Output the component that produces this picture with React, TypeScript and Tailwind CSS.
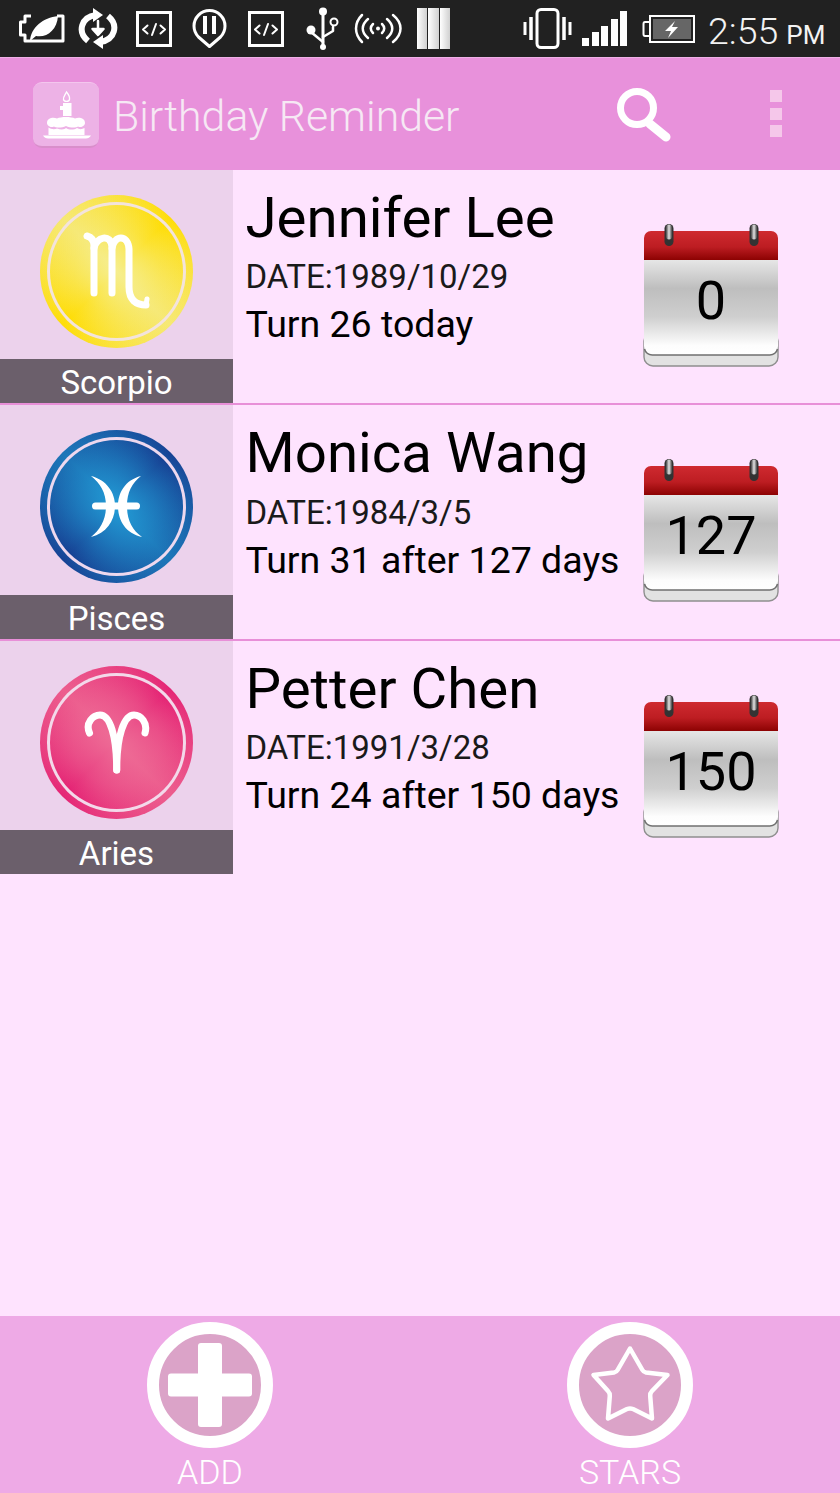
import type { ReactNode } from 'react'

const PEOPLE = [
  {
    name: 'Jennifer Lee',
    date: 'DATE:1989/10/29',
    turn: 'Turn 26 today',
    days: '0',
    sign: 'Scorpio',
    disc: 'bg-[radial-gradient(circle,#f6ee8e_0%,#f6ee8e55_45%,transparent_75%),conic-gradient(from_45deg,#ffdc00_0deg,#f6e873_90deg,#ffdc00_180deg,#f6e873_270deg,#ffdc00_360deg)]',
    rim: 'bg-[#f3e3dc]',
  },
  {
    name: 'Monica Wang',
    date: 'DATE:1984/3/5',
    turn: 'Turn 31 after 127 days',
    days: '127',
    sign: 'Pisces',
    disc: 'bg-[radial-gradient(circle,#229cd6_0%,#229cd688_40%,transparent_80%),conic-gradient(from_45deg,#15348a_0deg,#1c6fb3_90deg,#15348a_180deg,#1c6fb3_270deg,#15348a_360deg)]',
    rim: 'bg-[#eed8ee]',
  },
  {
    name: 'Petter Chen',
    date: 'DATE:1991/3/28',
    turn: 'Turn 24 after 150 days',
    days: '150',
    sign: 'Aries',
    disc: 'bg-[radial-gradient(circle,#ee6c96_0%,#ee6c9688_45%,transparent_80%),conic-gradient(from_45deg,#e3186f_0deg,#ec5a8c_90deg,#e3186f_180deg,#ec5a8c_270deg,#e3186f_360deg)]',
    rim: 'bg-[#f3d9ea]',
  },
]

function Glyph({ sign }: { sign: string }) {
  return (
    <svg viewBox="0 0 153 153" className="absolute inset-0 w-[153px] h-[153px]" fill="none" stroke="#fff" strokeLinecap="round" strokeLinejoin="round">
      {sign === 'Scorpio' && (
        <g strokeWidth="7">
          <path d="M47 41 C51 42 54 45 54 51 V98" />
          <path d="M54 53 C56 42 71 38 72 52 V98" />
          <path d="M72 53 C74 40 88 39 89 54 V92 C89 105 96 110 106 110" />
          <path d="M106 110 L107 104" strokeWidth="5" />
        </g>
      )}
      {sign === 'Pisces' && (
        <g fill="#fff" stroke="none">
          <path d="M51 46 C67 50 75 63 75 76 C75 90 67 103 51 107 C60 100 66 90 66 76 C66 62 60 53 51 46 Z" />
          <path d="M101 46 C85 50 78 63 78 76 C78 90 85 103 102 107 C92 100 87 90 87 76 C87 62 92 53 101 46 Z" />
          <rect x="52" y="72.5" width="48" height="7" rx="3.5" />
        </g>
      )}
      {sign === 'Aries' && (
        <g strokeWidth="7">
          <path d="M49.5 67 C45 57 53 49 60 49 C70 49 76.7 70 76.7 104" />
          <path d="M105 67 C108 57 101 49 94 49 C84 49 76.7 70 76.7 104" />
        </g>
      )}
    </svg>
  )
}

function Calendar({ days, id }: { days: string; id: number }) {
  return (
    <div className="relative w-[136px] h-[145px]">
      <svg viewBox="0 0 136 145" className="absolute inset-0 w-[136px] h-[145px]">
        <defs>
          <linearGradient id={`red${id}`} x1="0" y1="0" x2="0" y2="1">
            <stop offset="0" stopColor="#cf2a30" />
            <stop offset="0.55" stopColor="#bd1d22" />
            <stop offset="1" stopColor="#8c0202" />
          </linearGradient>
          <linearGradient id={`sheet${id}`} x1="0" y1="0" x2="0" y2="1">
            <stop offset="0" stopColor="#e6e6e6" />
            <stop offset="0.3" stopColor="#bebebe" />
            <stop offset="0.6" stopColor="#cfcfcf" />
            <stop offset="0.9" stopColor="#fdfdfd" />
            <stop offset="1" stopColor="#ffffff" />
          </linearGradient>
          <linearGradient id={`ring${id}`} x1="0" y1="0" x2="1" y2="0">
            <stop offset="0" stopColor="#444" />
            <stop offset="0.5" stopColor="#e4e4e4" />
            <stop offset="1" stopColor="#444" />
          </linearGradient>
        </defs>
        <rect x="1" y="110" width="134" height="34" rx="9" fill="#e2e2e2" stroke="#8f8f8f" strokeWidth="1.4" />
        <path d="M1 38 H135 V124 a9 9 0 0 1 -9 9 H10 a9 9 0 0 1 -9 -9 Z" fill={`url(#sheet${id})`} />
        <path d="M1.5 127 a8 8 0 0 0 8 6 H126.5 a8 8 0 0 0 8 -6" fill="none" stroke="#707070" strokeWidth="1.6" />
        <path d="M1 38 V16 a7 7 0 0 1 7 -7 H128 a7 7 0 0 1 7 7 V38 Z" fill={`url(#red${id})`} />
        <rect x="21.5" y="2" width="9" height="22" rx="4.5" fill="#333" />
        <rect x="23" y="2.5" width="6" height="15" rx="3" fill={`url(#ring${id})`} />
        <rect x="106.5" y="2" width="9" height="22" rx="4.5" fill="#333" />
        <rect x="108" y="2.5" width="6" height="15" rx="3" fill={`url(#ring${id})`} />
      </svg>
      <div className="absolute left-0 right-0 top-[48px] text-center text-[54px] leading-[62px] text-black">{days}</div>
    </div>
  )
}

function Row({ person, index }: { person: (typeof PEOPLE)[number]; index: number }) {
  return (
    <div className={`flex h-[235.5px] border-b-[2px] ${index < 2 ? 'border-[#e88fd8]' : 'border-transparent'}`}>
      <div className="w-[233px] flex flex-col bg-[#ecd2ec]">
        <div className="flex-1 flex justify-center pt-[25px]">
          <div className={`relative w-[153px] h-[153px] rounded-full ${person.disc}`}>
            <div className={`absolute inset-[7px] rounded-full ${person.rim}`} />
            <div className={`absolute inset-[10px] rounded-full ${person.disc}`} />
            <Glyph sign={person.sign} />
          </div>
        </div>
        <div className="h-[44px] bg-[#6b5f6b] text-white text-center text-[33px] leading-[48px]">{person.sign}</div>
      </div>
      <div className="flex-1 pl-[12.5px] pt-[15px] text-black whitespace-nowrap">
        <div className="text-[56.4px] leading-[66px]">{person.name}</div>
        <div className="text-[33px] leading-[40px] mt-[6.5px] text-[#1a1a1a]">{person.date}</div>
        <div className="text-[37.5px] leading-[48px] mt-[3px]">{person.turn}</div>
      </div>
      <div className="w-[136px] mr-[61px] pt-[52px]">
        <Calendar days={person.days} id={index} />
      </div>
    </div>
  )
}

function Ic({ w, h, ml, children }: { w: number; h: number; ml: string; children: ReactNode }) {
  return (
    <svg viewBox={`0 0 ${w} ${h}`} width={w} height={h} className={`shrink-0 ${ml}`} fill="none" stroke="#fff" strokeLinecap="round" strokeLinejoin="round">
      {children}
    </svg>
  )
}

function CodeBox({ ml }: { ml: string }) {
  return (
    <Ic w={36} h={36} ml={ml}>
      <rect x="1.5" y="1.5" width="33" height="33" strokeWidth="3" strokeLinejoin="miter" />
      <path d="M11.5 14.5 L7 18.5 L11.5 22.5 M24.5 14.5 L29 18.5 L24.5 22.5 M20 13 L16 24" strokeWidth="2" />
    </Ic>
  )
}

function StatusBar() {
  return (
    <div className="h-[57px] bg-[#212121] flex items-center pl-[19px] shrink-0">
      <Ic w={47} h={29} ml="">
        <path d="M12 2 H6 V8 H1.5 V21 H6 V27 H44 M24 27 H44 V2 H38" strokeWidth="3" strokeLinecap="butt" />
        <path d="M11 27 C12 13 24 4 39 2 C38 16 28 24 17 22 L11 27 Z" fill="#fff" stroke="none" />
      </Ic>
      <Ic w={42} h={41} ml="ml-[11px]">
        <path d="M11 33 C0 24 4 9 19 7" strokeWidth="6" strokeLinecap="butt" />
        <path d="M16 0 L26 7 L16 14 Z" fill="#fff" stroke="none" />
        <path d="M31 8 C42 17 38 32 23 34" strokeWidth="6" strokeLinecap="butt" />
        <path d="M26 41 L16 34 L26 27 Z" fill="#fff" stroke="none" />
        <path d="M21 13 V22 M15.5 21 H26.5 L21 27 Z" strokeWidth="2.5" fill="#fff" />
      </Ic>
      <CodeBox ml="ml-[17px]" />
      <Ic w={35} h={39} ml="ml-[20px]">
        <path d="M17.5 37.5 L6.5 28 A15.5 15.5 0 1 1 28.5 28 Z" strokeWidth="3" />
        <path d="M13 7 V25 M22 7 V25" strokeWidth="4" strokeLinecap="butt" />
      </Ic>
      <CodeBox ml="ml-[21px]" />
      <Ic w={33} h={43} ml="ml-[22px]">
        <circle cx="17" cy="4.5" r="4" fill="#fff" stroke="none" />
        <path d="M17 6 V39" strokeWidth="3" />
        <circle cx="17" cy="40" r="3" fill="#fff" stroke="none" />
        <circle cx="5" cy="23" r="4.5" fill="#fff" stroke="none" />
        <path d="M5 25 L17 35 M17 30 L27 24 V20" strokeWidth="2.5" />
        <circle cx="28" cy="15" r="3.5" strokeWidth="2" />
      </Ic>
      <Ic w={48} h={31} ml="ml-[15px]">
        <path d="M8 2 C-0 10 -0 21 8 29 M39 2 C49 10 49 21 39 29 M14 6 C7 12 7 19 14 25 M33 6 C40 12 40 19 33 25 M19 11 C16 14 16 17 19 20 M28 11 C31 14 31 17 28 20" strokeWidth="2.5" />
        <circle cx="24" cy="15.5" r="2" fill="#fff" stroke="none" />
      </Ic>
      <div className="ml-[15px] w-[33px] h-[41px] flex gap-[1px] shrink-0">
        <div className="flex-1 bg-gradient-to-r from-white to-[#d0d0d0]" />
        <div className="flex-1 bg-gradient-to-r from-white to-[#d0d0d0]" />
        <div className="flex-1 bg-gradient-to-r from-white to-[#d0d0d0]" />
      </div>
      <Ic w={49} h={41} ml="ml-[73px]">
        <rect x="14" y="1.5" width="21" height="38" rx="4" strokeWidth="3" />
        <path d="M8 9 V32 M41 9 V32" strokeWidth="3.5" strokeLinecap="butt" />
        <path d="M2 14 V27 M47 14 V27" strokeWidth="3" strokeLinecap="butt" />
      </Ic>
      <div className="ml-[10px] flex items-end gap-[2.5px] h-[35px] shrink-0">
        <div className="w-[7px] h-[8px] bg-white" />
        <div className="w-[7px] h-[14px] bg-white" />
        <div className="w-[7px] h-[20px] bg-white" />
        <div className="w-[7px] h-[27px] bg-white" />
        <div className="w-[7px] h-[35px] bg-white" />
      </div>
      <Ic w={53} h={28} ml="ml-[15px]">
        <path d="M8 7 H3 Q1.5 7 1.5 9 V19 Q1.5 21 3 21 H8" strokeWidth="2" />
        <rect x="8" y="1" width="44" height="26" strokeWidth="2" strokeLinejoin="miter" />
        <rect x="11" y="4" width="38" height="20" fill="#666" stroke="none" />
        <path d="M33 6 L23 16 H29 L26 23 L36 12 H30 Z" fill="#fff" stroke="none" />
      </Ic>
      <div className="ml-[13px] text-[#f3f3f3] font-light text-[37.5px] leading-none mt-[7px] shrink-0">2:55</div>
      <div className="ml-[8px] text-[#f3f3f3] text-[26px] leading-none mt-[13px] shrink-0">PM</div>
    </div>
  )
}

function AppBar() {
  return (
    <div className="h-[112.5px] bg-[#e891db] border-t border-[#eeb0e6] flex items-center pl-[33px] shrink-0">
      <div className="w-[66px] h-[66px] mt-[2px] rounded-[9px] bg-[#edb2e6] border-t border-[#f3c6ee] border-b-2 border-b-[#d98ecb] flex items-center justify-center shrink-0">
        <svg viewBox="0 0 66 65" width="66" height="65" fill="#fff">
          <path d="M33.5 10 C36 13 37 15 36.5 17.5 C36 20 31 20 30.5 17.5 C30 15 32 13 33.5 10 Z" fill="none" stroke="#fff" strokeWidth="1.3" />
          <path d="M30 21 H38.5 V34 H30 V28 H27 V24 H30 Z" />
          <path d="M14 41 C14 36 20 35 24 36.5 C28 34.5 38 34.5 42 36.5 C46 35 52 36 52 41 C52 44 48 46 45 44.5 C43 46 37 46 33 44 C29 46 23 46 21 44.5 C18 46 14 44 14 41 Z" />
          <path d="M15.5 45.5 C18 47.5 22 47.5 24 46.5 C28 48 32 47.5 33 46 C36 48 41 48 44 46 C46 47.5 49 47.5 51.5 46 V53 H15.5 Z" />
          <path d="M10 53.5 H58 C57 55.5 55 56.5 53 56.5 H15 C13 56.5 11 55.5 10 53.5 Z" />
        </svg>
      </div>
      <div className="ml-[14px] mt-[6px] text-[42.8px] font-light text-[#f6e8f4] leading-none whitespace-nowrap">Birthday Reminder</div>
      <svg viewBox="0 0 56 56" width="56" height="56" className="ml-[156px] mt-[2px] shrink-0" fill="none" stroke="#fff" strokeLinecap="round">
        <circle cx="21" cy="21" r="16.5" strokeWidth="7" />
        <path d="M34 37 L50 50" strokeWidth="9" />
      </svg>
      <div className="ml-[98px] flex flex-col gap-[5.5px] shrink-0">
        <div className="w-[12px] h-[12px] bg-[#f5c7ea]" />
        <div className="w-[12px] h-[12px] bg-[#f5c7ea]" />
        <div className="w-[12px] h-[12px] bg-[#f5c7ea]" />
      </div>
    </div>
  )
}

function BottomButton({ label, children }: { label: string; children: ReactNode }) {
  return (
    <div className="flex flex-col items-center">
      <div className="relative w-[126px] h-[126px] rounded-full border-[12.5px] border-white bg-[#dba3c8]">
        <svg viewBox="0 0 126 126" width="126" height="126" className="absolute top-[-12.5px] left-[-12.5px]">
          {children}
        </svg>
      </div>
      <div className="text-white font-light text-[34px] leading-[36px] mt-[6px]">{label}</div>
    </div>
  )
}

export default function App() {
  return (
    <div className="w-[840px] h-[1493px] flex flex-col overflow-hidden bg-[#fee3fe] font-['Roboto',sans-serif]">
      <StatusBar />
      <AppBar />
      <div className="flex-1">
        {PEOPLE.map((p, i) => (
          <Row key={p.name} person={p} index={i} />
        ))}
      </div>
      <div className="h-[177px] bg-[#eeaae6] grid grid-cols-2 pt-[6px] shrink-0">
        <BottomButton label="ADD">
          <path d="M54 21 H72 Q75 21 75 24 V51.5 H102 Q105 51.5 105 54.5 V71.5 Q105 74.5 102 74.5 H75 V102 Q75 105 72 105 H54 Q51 105 51 102 V74.5 H24 Q21 74.5 21 71.5 V54.5 Q21 51.5 24 51.5 H51 V24 Q51 21 54 21 Z" fill="#fff" />
        </BottomButton>
        <BottomButton label="STARS">
          <path d="M63 26.5 L75.4 48 Q76.5 50 79 50.5 L100.5 53 L85 69 Q83 71 83.2 74 L85 96.5 L66 87 Q63 85.8 60 87 L41 96.5 L42.8 74 Q43 71 41 69 L26.5 53 L47 50.5 Q49.5 50 50.6 48 Z" fill="none" stroke="#fff" strokeWidth="4.5" strokeLinejoin="round" />
        </BottomButton>
      </div>
    </div>
  )
}
